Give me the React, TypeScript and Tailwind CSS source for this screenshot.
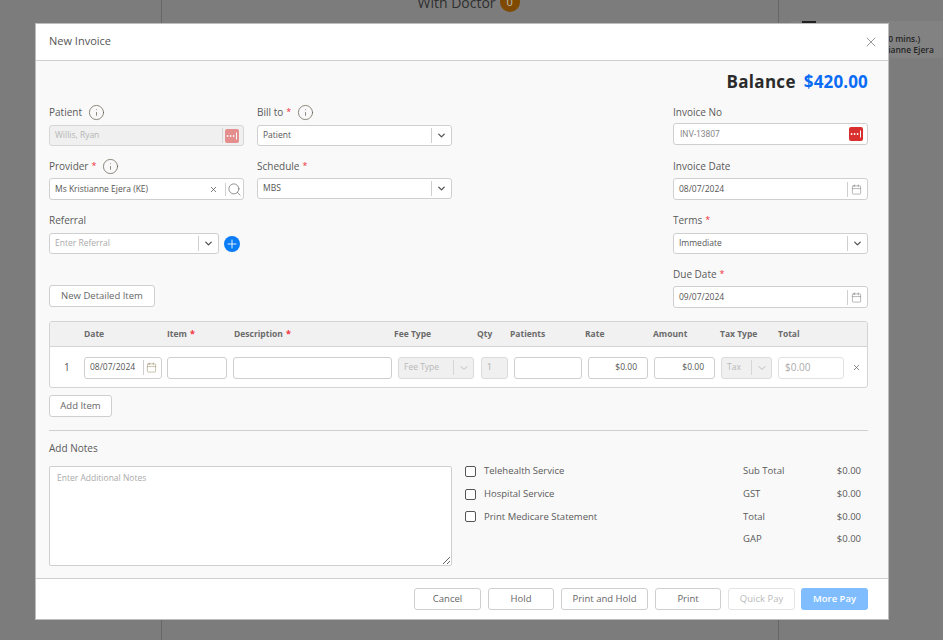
import { Calendar, ChevronDown, Info, Plus, Search, X } from "lucide-react";
import type { ReactNode } from "react";

function Star() {
  return <span className="ml-[3px] text-[9px] text-[#f0303a]">*</span>;
}

function Label({ text, required, info }: { text: string; required?: boolean; info?: boolean }) {
  return (
    <div className="flex h-[14px] items-center text-[10px] leading-[14px] text-[#5a5a5a]">
      <span>{text}</span>
      {required && <Star />}
      {info && <Info size={17} strokeWidth={1} className="ml-[6px] text-[#5f5a4a]" />}
    </div>
  );
}

function DotsButton({ faded }: { faded?: boolean }) {
  return (
    <svg width="14" height="14" viewBox="0 0 14 14" className={faded ? "opacity-50" : ""}>
      <rect width="14" height="14" rx="2" fill="#d9302f" />
      <circle cx="2.6" cy="7" r="0.9" fill="#fff" />
      <circle cx="5.6" cy="7" r="0.9" fill="#fff" />
      <circle cx="8.6" cy="7" r="0.9" fill="#fff" />
      <rect x="11" y="3.5" width="1" height="7" fill="#fff" />
    </svg>
  );
}

function Box({ children, className }: { children: ReactNode; className?: string }) {
  return (
    <div className={`flex items-center rounded-[3px] border border-[#cfcfcf] bg-white text-[8.5px] text-[#555] ${className ?? ""}`}>
      {children}
    </div>
  );
}

function SelectBox({ value, placeholder, className }: { value?: string; placeholder?: string; className?: string }) {
  return (
    <Box className={className}>
      <span className={`flex-1 pl-[5px] ${placeholder ? "text-[#aaa]" : ""}`}>{value ?? placeholder}</span>
      <span className="h-[15px] w-px bg-[#cfcfcf]" />
      <span className="flex w-[19px] justify-center">
        <ChevronDown size={11} strokeWidth={3} className="text-[#555]" />
      </span>
    </Box>
  );
}

function DateBox({ value }: { value: string }) {
  return (
    <Box className="h-[22px] w-[195px]">
      <span className="flex-1 pl-[5px]">{value}</span>
      <span className="h-[15px] w-px bg-[#cfcfcf]" />
      <span className="flex w-[19px] justify-center pr-[2px]">
        <Calendar size={11} strokeWidth={1} className="text-[#666]" />
      </span>
    </Box>
  );
}

function Btn({ children, className }: { children: ReactNode; className?: string }) {
  return (
    <button className={`h-[22px] rounded-[3px] border border-[#cfcfcf] bg-white text-[9.5px] font-medium text-[#666] ${className ?? ""}`}>
      {children}
    </button>
  );
}

function Check({ text }: { text: string }) {
  return (
    <div className="flex h-[22.7px] items-center">
      <span className="h-[11px] w-[11px] rounded-[2px] border border-[#555] bg-white" />
      <span className="ml-[8px] text-[9.5px] font-medium text-[#5a5a5a]">{text}</span>
    </div>
  );
}

function Sum({ label, value }: { label: string; value: string }) {
  return (
    <div className="flex h-[22.7px] items-center justify-between text-[9.5px] text-[#5a5a5a]">
      <span>{label}</span>
      <span>{value}</span>
    </div>
  );
}

const headers: [string, string, boolean?][] = [
  ["Date", "w-[83px]"],
  ["Item", "w-[67px]", true],
  ["Description", "w-[160px]", true],
  ["Fee Type", "w-[83px]"],
  ["Qty", "w-[33px]"],
  ["Patients", "w-[75px]"],
  ["Rate", "w-[68px]"],
  ["Amount", "w-[67px]"],
  ["Tax Type", "w-[58px]"],
  ["Total", "w-[40px]"],
];

export default function App() {
  return (
    <div className="relative flex h-[640px] w-[943px] overflow-hidden bg-[#7c7c7c] font-['Open_Sans',sans-serif]">
      {/* page behind the overlay */}
      <div className="h-full w-[162px] border-r border-[#666]" />
      <div className="flex h-full w-[617px] justify-center border-r border-[#666] pr-[3px]">
        <div className="mt-[-9px] flex h-[22px] items-center gap-[4px] text-[14px] text-[#2f2f2f]">
          <span>With Doctor</span>
          <span className="flex h-[20px] w-[20px] items-center justify-center rounded-full bg-[#7f4a00] text-[11px] text-[#bbb]">0</span>
        </div>
      </div>
      <div className="flex-1 pl-[12px] pt-[21px]">
        <div className="relative flex h-[37px] bg-[#828282] pl-[64px] pt-[12px] text-[8.5px] font-semibold leading-[11px] text-[#262626]">
          <span className="absolute left-[11px] top-0 h-[12px] w-[14px] rounded-b-[2px] bg-[#222]" />
          <div className="whitespace-nowrap">
            <div>Initial (50 mins.)</div>
            <div>Ms Kristianne Ejera</div>
          </div>
        </div>
      </div>

      {/* modal */}
      <div className="absolute left-[36px] top-[24px] flex h-[595px] w-[852px] flex-col bg-[#f9f9f9] shadow-[0_0_0_1px_#bdbdbd]">
        <div className="flex h-[37px] shrink-0 items-center justify-between border-b border-[#cfcfcf] bg-white pb-[1px] pl-[13px] pr-[9px]">
          <span className="text-[11px] text-[#555]">New Invoice</span>
          <X size={16} strokeWidth={1} className="text-[#666]" />
        </div>

        <div className="flex min-h-0 flex-1 flex-col pl-[13px] pr-[20px]">
          <div className="mt-[9px] flex h-[24px] shrink-0 items-center justify-end gap-[8px] text-[17px] font-bold">
            <span className="tracking-[0.3px] text-[#2b2b2b]">Balance</span>
            <span className="tracking-[0.15px] text-[#0a6cf5]">$420.00</span>
          </div>

          <div className="mt-[10px] flex h-[205px] shrink-0 justify-between">
            <div className="w-[403px]">
              <div className="grid grid-cols-[195px_195px] gap-x-[13px]">
                <div className="h-[54px] pt-[1px]">
                  <Label text="Patient" info />
                  <div className="mt-[6px] flex h-[21px] items-center rounded-[3px] border border-[#d6d6d6] bg-[#f0f0f0] text-[8.5px] text-[#b5b5b5]">
                    <span className="flex-1 pl-[5px]">Willis, Ryan</span>
                    <span className="mr-[2px] h-[15px] w-px bg-[#d6d6d6]" />
                    <span className="mr-[4px] flex"><DotsButton faded /></span>
                  </div>
                </div>
                <div className="h-[54px] pt-[1px]">
                  <Label text="Bill to" required info />
                  <SelectBox value="Patient" className="mt-[6px] h-[21px]" />
                </div>
                <div className="h-[54px] pt-[1px]">
                  <Label text="Provider" required info />
                  <Box className="mt-[5px] h-[22px]">
                    <span className="flex-1 pl-[5px]">Ms Kristianne Ejera (KE)</span>
                    <X size={9} strokeWidth={2} className="mr-[7px] text-[#555]" />
                    <span className="h-[13px] w-px bg-[#cfcfcf]" />
                    <Search size={15} strokeWidth={1} className="mx-[1px] text-[#555]" />
                  </Box>
                </div>
                <div className="h-[54px] pt-[1px]">
                  <Label text="Schedule" required />
                  <SelectBox value="MBS" className="mt-[5px] h-[21px]" />
                </div>
                <div className="col-span-2 pt-[1px]">
                  <Label text="Referral" />
                  <div className="mt-[6px] flex items-center gap-[5px]">
                    <SelectBox placeholder="Enter Referral" className="h-[21px] w-[170px]" />
                    <span className="flex h-[16px] w-[16px] items-center justify-center rounded-full bg-[#0a7cf5]">
                      <Plus size={14} strokeWidth={1.5} className="text-white" />
                    </span>
                  </div>
                </div>
              </div>
              <Btn className="mt-[31px] h-[21px] w-[106px]">New Detailed Item</Btn>
            </div>

            <div className="w-[195px]">
              <div className="h-[54px] pt-[1px]">
                <Label text="Invoice No" />
                <Box className="mt-[4px] h-[22px]">
                  <span className="flex-1 pl-[6px] font-['Roboto',sans-serif] text-[#888]">INV-13807</span>
                  <span className="mr-[4px] flex"><DotsButton /></span>
                </Box>
              </div>
              <div className="h-[54px] pt-[1px]">
                <Label text="Invoice Date" />
                <div className="mt-[5px]"><DateBox value="08/07/2024" /></div>
              </div>
              <div className="h-[54px] pt-[1px]">
                <Label text="Terms" required />
                <SelectBox value="Immediate" className="mt-[6px] h-[21px]" />
              </div>
              <div className="pt-[1px]">
                <Label text="Due Date" required />
                <div className="mt-[5px]"><DateBox value="09/07/2024" /></div>
              </div>
            </div>
          </div>

          <div className="mt-[12px] h-[67px] w-[819px] shrink-0 overflow-hidden rounded-[3px] border border-[#d4d4d4] bg-white">
            <div className="flex h-[25px] items-center border-b border-[#d4d4d4] bg-[#f1f1f1] pl-[34px] text-[8.5px] font-bold text-[#6b6b6b]">
              {headers.map(([name, width, req]) => (
                <div key={name} className={`shrink-0 ${width}`}>
                  {name}
                  {req && <Star />}
                </div>
              ))}
            </div>
            <div className="flex h-[41px] items-center gap-[6px] pl-[14px]">
              <span className="w-[14px] text-[10px] text-[#555]">1</span>
              <Box className="h-[22px] w-[78px] border-[#bdbdbd]">
                <span className="flex-1 pl-[5px]">08/07/2024</span>
                <span className="h-[15px] w-px bg-[#cfcfcf]" />
                <span className="flex w-[17px] justify-center pr-[2px]">
                  <Calendar size={11} strokeWidth={1} className="text-[#8a7a50]" />
                </span>
              </Box>
              <Box className="ml-[-1px] h-[22px] w-[60px] border-[#bdbdbd]"> </Box>
              <Box className="h-[22px] w-[159px] border-[#bdbdbd]"> </Box>
              <div className="flex h-[22px] w-[76px] items-center rounded-[3px] border border-[#dcdcdc] bg-[#f0f0f0] text-[8.5px] text-[#b8b8b8]">
                <span className="flex-1 pl-[5px]">Fee Type</span>
                <span className="h-[15px] w-px bg-[#d6d6d6]" />
                <span className="flex w-[19px] justify-center">
                  <ChevronDown size={12} strokeWidth={2} className="text-[#bbb]" />
                </span>
              </div>
              <div className="ml-[1px] flex h-[22px] w-[27px] items-center rounded-[3px] border border-[#dcdcdc] bg-[#f0f0f0] pl-[5px] text-[8.5px] text-[#aaa]">1</div>
              <Box className="h-[22px] w-[68px] border-[#bdbdbd]"> </Box>
              <Box className="h-[22px] w-[60px] justify-end border-[#bdbdbd] pr-[10px]">$0.00</Box>
              <Box className="h-[22px] w-[61px] justify-end border-[#bdbdbd] pr-[10px]">$0.00</Box>
              <div className="flex h-[22px] w-[51px] items-center rounded-[3px] border border-[#dcdcdc] bg-[#f0f0f0] text-[8.5px] text-[#b8b8b8]">
                <span className="flex-1 pl-[5px]">Tax</span>
                <span className="h-[15px] w-px bg-[#d6d6d6]" />
                <span className="flex w-[19px] justify-center">
                  <ChevronDown size={12} strokeWidth={2} className="text-[#bbb]" />
                </span>
              </div>
              <div className="flex h-[22px] w-[66px] items-center rounded-[3px] border border-[#e2e2e2] bg-white pl-[6px] text-[10px] text-[#aaa]">$0.00</div>
              <X size={9} strokeWidth={2} className="ml-[2px] text-[#666]" />
            </div>
          </div>

          <Btn className="mt-[7px] h-[21px] w-[63px] shrink-0">Add Item</Btn>

          <div className="mt-[13px] h-px w-[819px] shrink-0 bg-[#d0d0d0]" />

          <div className="mt-[10px] shrink-0"><Label text="Add Notes" /></div>

          <div className="mt-[11px] flex h-[100px] shrink-0">
            <textarea
              placeholder="Enter Additional Notes"
              className="h-[100px] w-[403px] rounded-[2px] border border-[#cfcfcf] bg-white px-[7px] py-[5px] text-[8.5px] outline-none placeholder:text-[#aaa]"
            />
            <div className="ml-[13px] w-[278px]">
              <div className="mt-[-6px]">
                <Check text="Telehealth Service" />
                <Check text="Hospital Service" />
                <Check text="Print Medicare Statement" />
              </div>
            </div>
            <div className="mt-[-6px] w-[118px]">
              <Sum label="Sub Total" value="$0.00" />
              <Sum label="GST" value="$0.00" />
              <Sum label="Total" value="$0.00" />
              <Sum label="GAP" value="$0.00" />
            </div>
          </div>
        </div>

        <div className="flex h-[41px] shrink-0 items-center justify-end gap-[7px] border-t border-[#cfcfcf] bg-white pr-[20px]">
          <Btn className="w-[67px]">Cancel</Btn>
          <Btn className="w-[66px]">Hold</Btn>
          <Btn className="w-[87px]">Print and Hold</Btn>
          <Btn className="w-[66px]">Print</Btn>
          <Btn className="w-[67px] border-[#e4e4e4] text-[#bbb]">Quick Pay</Btn>
          <button className="ml-[-1px] h-[22px] w-[67px] rounded-[3px] bg-[#80bdff] text-[9.5px] font-semibold text-white">More Pay</button>
        </div>
      </div>
    </div>
  );
}
